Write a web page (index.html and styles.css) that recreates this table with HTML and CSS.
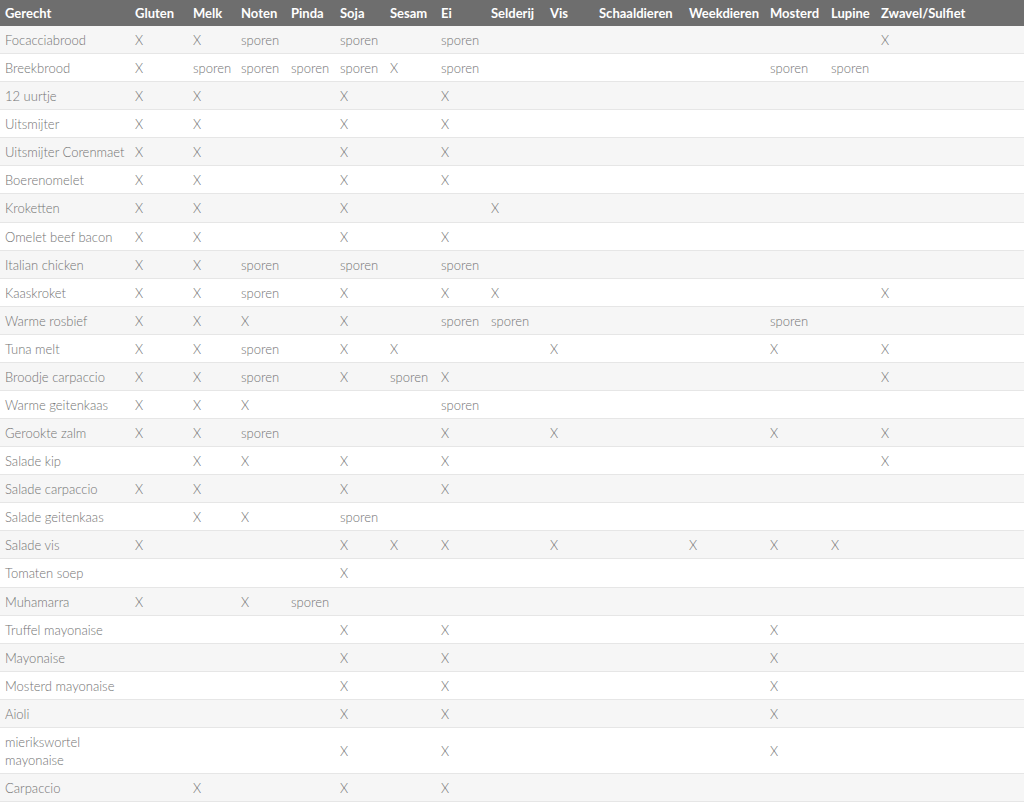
FILE: index.html
```html
<!DOCTYPE html>
<html lang="nl">
<head>
<meta charset="utf-8">
<title>Allergenen</title>
<link rel="stylesheet" href="styles.css">
</head>
<body>
<table class="allergens">
<colgroup>
<col class="c-dish"><col class="c-gluten"><col class="c-melk"><col class="c-noten"><col class="c-pinda"><col class="c-soja"><col class="c-sesam"><col class="c-ei"><col class="c-selderij"><col class="c-vis"><col class="c-schaal"><col class="c-week"><col class="c-mosterd"><col class="c-lupine"><col class="c-zwavel">
</colgroup>
<thead>
<tr><th>Gerecht</th><th>Gluten</th><th>Melk</th><th>Noten</th><th>Pinda</th><th>Soja</th><th>Sesam</th><th>Ei</th><th>Selderij</th><th>Vis</th><th>Schaaldieren</th><th>Weekdieren</th><th>Mosterd</th><th>Lupine</th><th>Zwavel/Sulfiet</th></tr>
</thead>
<tbody>
<tr><td>Focacciabrood</td><td>X</td><td>X</td><td>sporen</td><td></td><td>sporen</td><td></td><td>sporen</td><td></td><td></td><td></td><td></td><td></td><td></td><td>X</td></tr>
<tr><td>Breekbrood</td><td>X</td><td>sporen</td><td>sporen</td><td>sporen</td><td>sporen</td><td>X</td><td>sporen</td><td></td><td></td><td></td><td></td><td>sporen</td><td>sporen</td><td></td></tr>
<tr><td>12 uurtje</td><td>X</td><td>X</td><td></td><td></td><td>X</td><td></td><td>X</td><td></td><td></td><td></td><td></td><td></td><td></td><td></td></tr>
<tr><td>Uitsmijter</td><td>X</td><td>X</td><td></td><td></td><td>X</td><td></td><td>X</td><td></td><td></td><td></td><td></td><td></td><td></td><td></td></tr>
<tr><td>Uitsmijter Corenmaet</td><td>X</td><td>X</td><td></td><td></td><td>X</td><td></td><td>X</td><td></td><td></td><td></td><td></td><td></td><td></td><td></td></tr>
<tr><td>Boerenomelet</td><td>X</td><td>X</td><td></td><td></td><td>X</td><td></td><td>X</td><td></td><td></td><td></td><td></td><td></td><td></td><td></td></tr>
<tr><td>Kroketten</td><td>X</td><td>X</td><td></td><td></td><td>X</td><td></td><td></td><td>X</td><td></td><td></td><td></td><td></td><td></td><td></td></tr>
<tr><td>Omelet beef bacon</td><td>X</td><td>X</td><td></td><td></td><td>X</td><td></td><td>X</td><td></td><td></td><td></td><td></td><td></td><td></td><td></td></tr>
<tr><td>Italian chicken</td><td>X</td><td>X</td><td>sporen</td><td></td><td>sporen</td><td></td><td>sporen</td><td></td><td></td><td></td><td></td><td></td><td></td><td></td></tr>
<tr><td>Kaaskroket</td><td>X</td><td>X</td><td>sporen</td><td></td><td>X</td><td></td><td>X</td><td>X</td><td></td><td></td><td></td><td></td><td></td><td>X</td></tr>
<tr><td>Warme rosbief</td><td>X</td><td>X</td><td>X</td><td></td><td>X</td><td></td><td>sporen</td><td>sporen</td><td></td><td></td><td></td><td>sporen</td><td></td><td></td></tr>
<tr><td>Tuna melt</td><td>X</td><td>X</td><td>sporen</td><td></td><td>X</td><td>X</td><td></td><td></td><td>X</td><td></td><td></td><td>X</td><td></td><td>X</td></tr>
<tr><td>Broodje carpaccio</td><td>X</td><td>X</td><td>sporen</td><td></td><td>X</td><td>sporen</td><td>X</td><td></td><td></td><td></td><td></td><td></td><td></td><td>X</td></tr>
<tr><td>Warme geitenkaas</td><td>X</td><td>X</td><td>X</td><td></td><td></td><td></td><td>sporen</td><td></td><td></td><td></td><td></td><td></td><td></td><td></td></tr>
<tr><td>Gerookte zalm</td><td>X</td><td>X</td><td>sporen</td><td></td><td></td><td></td><td>X</td><td></td><td>X</td><td></td><td></td><td>X</td><td></td><td>X</td></tr>
<tr><td>Salade kip</td><td></td><td>X</td><td>X</td><td></td><td>X</td><td></td><td>X</td><td></td><td></td><td></td><td></td><td></td><td></td><td>X</td></tr>
<tr><td>Salade carpaccio</td><td>X</td><td>X</td><td></td><td></td><td>X</td><td></td><td>X</td><td></td><td></td><td></td><td></td><td></td><td></td><td></td></tr>
<tr><td>Salade geitenkaas</td><td></td><td>X</td><td>X</td><td></td><td>sporen</td><td></td><td></td><td></td><td></td><td></td><td></td><td></td><td></td><td></td></tr>
<tr><td>Salade vis</td><td>X</td><td></td><td></td><td></td><td>X</td><td>X</td><td>X</td><td></td><td>X</td><td></td><td>X</td><td>X</td><td>X</td><td></td></tr>
<tr><td>Tomaten soep</td><td></td><td></td><td></td><td></td><td>X</td><td></td><td></td><td></td><td></td><td></td><td></td><td></td><td></td><td></td></tr>
<tr><td>Muhamarra</td><td>X</td><td></td><td>X</td><td>sporen</td><td></td><td></td><td></td><td></td><td></td><td></td><td></td><td></td><td></td><td></td></tr>
<tr><td>Truffel mayonaise</td><td></td><td></td><td></td><td></td><td>X</td><td></td><td>X</td><td></td><td></td><td></td><td></td><td>X</td><td></td><td></td></tr>
<tr><td>Mayonaise</td><td></td><td></td><td></td><td></td><td>X</td><td></td><td>X</td><td></td><td></td><td></td><td></td><td>X</td><td></td><td></td></tr>
<tr><td>Mosterd mayonaise</td><td></td><td></td><td></td><td></td><td>X</td><td></td><td>X</td><td></td><td></td><td></td><td></td><td>X</td><td></td><td></td></tr>
<tr><td>Aioli</td><td></td><td></td><td></td><td></td><td>X</td><td></td><td>X</td><td></td><td></td><td></td><td></td><td>X</td><td></td><td></td></tr>
<tr><td>mierikswortel mayonaise</td><td></td><td></td><td></td><td></td><td>X</td><td></td><td>X</td><td></td><td></td><td></td><td></td><td>X</td><td></td><td></td></tr>
<tr><td>Carpaccio</td><td></td><td>X</td><td></td><td></td><td>X</td><td></td><td>X</td><td></td><td></td><td></td><td></td><td></td><td></td><td></td></tr>
</tbody>
</table>
</body>
</html>
```
FILE: styles.css
```css
html, body {
  margin: 0;
  padding: 0;
  background: #ffffff;
}

.allergens {
  width: 1024px;
  border-collapse: collapse;
  table-layout: fixed;
  font-family: "Lato", "Open Sans", sans-serif;
  font-size: 13px;
}

.c-dish { width: 130px; }
.c-gluten { width: 58px; }
.c-melk { width: 48px; }
.c-noten { width: 50px; }
.c-pinda { width: 49px; }
.c-soja { width: 50px; }
.c-sesam { width: 51px; }
.c-ei { width: 50px; }
.c-selderij { width: 59px; }
.c-vis { width: 49px; }
.c-schaal { width: 90px; }
.c-week { width: 81px; }
.c-mosterd { width: 61px; }
.c-lupine { width: 50px; }
.c-zwavel { width: auto; }

.allergens th {
  background: #6e6e6e;
  color: #ffffff;
  font-weight: 700;
  text-align: left;
  padding: 4px 2px 4px 5px;
  line-height: 18px;
  white-space: nowrap;
  overflow: hidden;
}

.allergens td {
  color: #737373;
  font-weight: 300;
  text-align: left;
  vertical-align: middle;
  padding: 5px 2px 4px 5px;
  line-height: 18.08px;
  border-bottom: 1px solid #e6e6e6;
  white-space: nowrap;
}

.allergens td:first-child {
  white-space: normal;
  padding-right: 0;
}

.allergens tbody tr:nth-child(odd) {
  background: #f6f6f6;
}

.allergens tbody tr:nth-child(even) {
  background: #ffffff;
}
```
